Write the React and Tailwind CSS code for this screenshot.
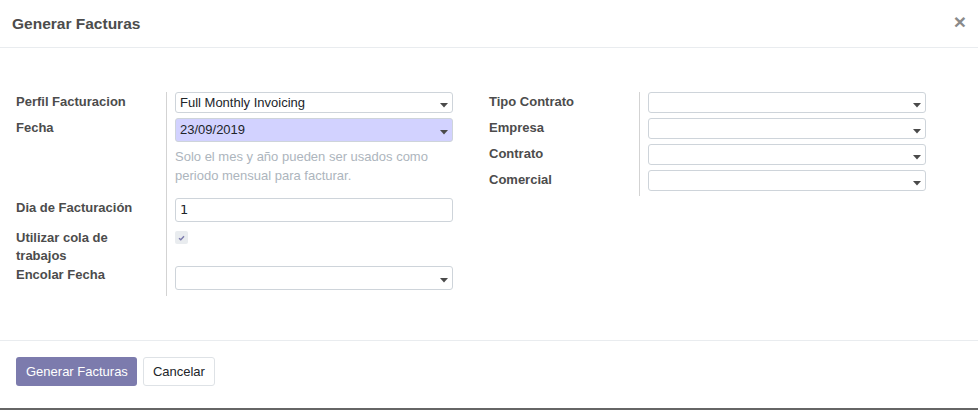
import React from 'react';

function Caret() {
  return (
    <svg width="8" height="5" viewBox="0 0 8 5" className="absolute right-[4px] top-1/2 translate-y-[0px]">
      <path d="M0 0 L8 0 L4 4.5 Z" fill="#4a4a4a" />
    </svg>
  );
}

function SelectBox({ value = '', h = 'h-[21px]', bg = 'bg-white' }) {
  return (
    <div className={`relative w-[278px] ${h} ${bg} border border-[#ced4da] rounded-[3px] pl-[4px] flex items-center text-[13px] text-[#212529]`}>
      <span>{value}</span>
      <Caret />
    </div>
  );
}

function Label({ children, lead = 'leading-5' }) {
  return <div className={`text-[13px] font-bold text-[#4c4c4c] ${lead}`}>{children}</div>;
}

function Row({ label, children, rowClass = '' }) {
  return (
    <div className={`flex ${rowClass}`}>
      <div className="w-[151px] shrink-0 border-r border-[#d3d3d3] pr-[10px]">{label}</div>
      <div className="pl-[8px]">{children}</div>
    </div>
  );
}

export default function App() {
  return (
    <div className="w-[978px] h-[410px] bg-white flex flex-col" style={{ fontFamily: '"Liberation Sans", Arial, sans-serif' }}>
      {/* Header */}
      <header className="h-[48px] shrink-0 border-b border-[#e9ecef] flex items-center justify-between pl-[12px] pr-[12px]">
        <h4 className="text-[15.5px] font-bold text-[#4c4c4c] mt-[1px]">Generar Facturas</h4>
        <button className="text-[21px] font-bold text-[#8a8a8a] leading-none -mt-[4px]">×</button>
      </header>

      {/* Body */}
      <main className="h-[292px] shrink-0 pt-[44px] pl-[16px] flex">
        <div className="w-[437px]">
          <Row rowClass="h-[26px]" label={<Label>Perfil Facturacion</Label>}>
            <SelectBox value="Full Monthly Invoicing" />
          </Row>
          <Row rowClass="h-[80px]" label={<Label>Fecha</Label>}>
            <SelectBox value="23/09/2019" h="h-[24px]" bg="bg-[#d2d2ff]" />
            <p className="mt-[5px] text-[13px] leading-[19px] text-[#adb5bd] w-[278px]">
              Solo el mes y año pueden ser usados como periodo mensual para facturar.
            </p>
          </Row>
          <Row rowClass="h-[31px]" label={<Label>Dia de Facturación</Label>}>
            <div className="w-[278px] h-[24px] border border-[#ced4da] rounded-[3px] pl-[4px] flex items-center text-[13px] text-[#212529]" style={{ fontFamily: '"DejaVu Sans", sans-serif' }}>1</div>
          </Row>
          <Row rowClass="h-[36px]" label={<Label lead="leading-[18px]">Utilizar cola de trabajos</Label>}>
            <div className="mt-[2px] w-[13px] h-[13px] rounded-[2px] bg-[#e9ecef] flex items-center justify-center">
              <svg width="7" height="6" viewBox="0 0 7 6">
                <path d="M1 3.2 L2.8 4.8 L6 1.2" stroke="#7c7bad" strokeWidth="1.4" fill="none" />
              </svg>
            </div>
          </Row>
          <Row rowClass="h-[31px]" label={<Label>Encolar Fecha</Label>}>
            <div className="mt-[1px]">
              <SelectBox h="h-[24px]" />
            </div>
          </Row>
        </div>

        <div className="w-[437px] ml-[36px]">
          {['Tipo Contrato', 'Empresa', 'Contrato', 'Comercial'].map((l) => (
            <Row key={l} rowClass="h-[26px]" label={<Label>{l}</Label>}>
              <SelectBox />
            </Row>
          ))}
        </div>
      </main>

      {/* Footer */}
      <footer className="flex-1 border-t border-[#e9ecef] pt-[16px] pl-[16px] flex items-start gap-[6px]">
        <button className="h-[29px] pl-[10px] pr-[9px] rounded-[3px] bg-[#7c7bad] text-white text-[13px]">Generar Facturas</button>
        <button className="h-[29px] px-[9px] rounded-[3px] bg-white border border-[#dee2e6] text-[#212529] text-[13px]">Cancelar</button>
      </footer>
      <div className="h-[2px] shrink-0 bg-[#666666]" />
    </div>
  );
}
